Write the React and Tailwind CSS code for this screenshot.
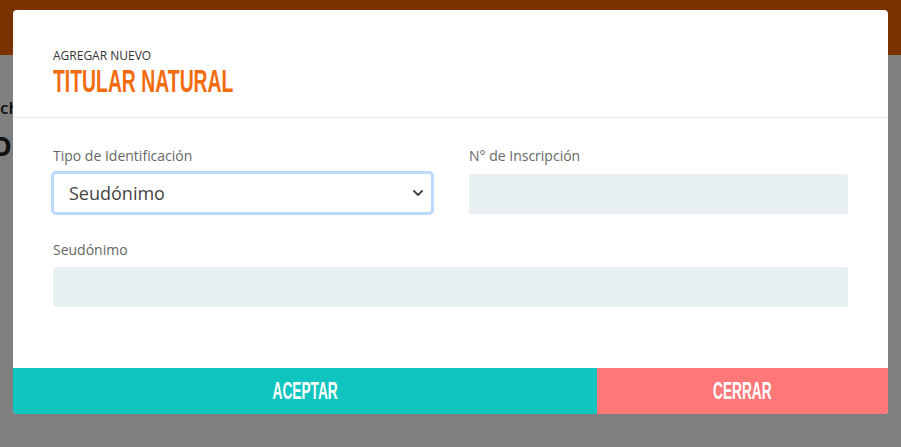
import { ChevronDown } from 'lucide-react'

const sans = "font-['Open_Sans',_'Liberation_Sans',_sans-serif]"
const narrow = "font-['Liberation_Sans',_Arial,_sans-serif]"

function Field({ label, children }) {
  return (
    <div className="flex flex-col">
      <label className="mb-[7px] text-[14px] leading-[20px] text-[#666]">{label}</label>
      {children}
    </div>
  )
}

function TextBox() {
  return <div className="h-[40px] rounded-[3px] bg-[#e8f0f3]" />
}

export default function App() {
  return (
    <div className={`relative h-[447px] w-[901px] overflow-hidden bg-white ${sans}`}>
      {/* page under the overlay */}
      <div className="h-[55px] bg-[#f46600]" />
      <div className="pt-[40px] text-[17px] font-semibold text-[#222]">
        <div>ch</div>
        <div className="-ml-[9px] mt-[6px] text-[26px] font-bold">O</div>
      </div>

      {/* overlay */}
      <div className="absolute inset-0 bg-black/50" />

      {/* modal */}
      <div className="absolute left-[13px] top-[10px] flex h-[404px] w-[875px] flex-col overflow-hidden rounded-[4px] bg-white">
        <div className="h-[108px] border-b border-[#e9e9e9] px-[40px] pt-[38px]">
          <div className="text-[12px] leading-[16px] text-[#333]">AGREGAR NUEVO</div>
          <div
            className={`mt-[1px] origin-left scale-x-[0.625] whitespace-nowrap text-[31px] font-bold leading-[34px] text-[#f26b0c] ${narrow}`}
          >
            TITULAR NATURAL
          </div>
        </div>

        <div className="flex-1 px-[40px] pt-[28px]">
          <div className="grid grid-cols-2 gap-x-[37px]">
            <Field label="Tipo de Identificación">
              <div className="-mx-[2px] -my-[2px] flex h-[44px] items-center justify-between rounded-[5px] border-[3px] border-[#bcdafc] bg-white pl-[15px] pr-[5px]">
                <span className="text-[18px] text-[#444]">Seudónimo</span>
                <ChevronDown size={16} strokeWidth={2.75} className="text-[#444]" />
              </div>
            </Field>
            <Field label="N° de Inscripción">
              <div className="mt-[1px]">
                <TextBox />
              </div>
            </Field>
          </div>
          <div className="mt-[26px]">
            <Field label="Seudónimo">
              <TextBox />
            </Field>
          </div>
        </div>

        <div className="flex h-[46px]">
          <button
            type="button"
            className={`flex w-[584px] items-center justify-center bg-[#10c4bf] text-[24px] font-bold text-white ${narrow}`}
          >
            <span className="scale-x-[0.57]">ACEPTAR</span>
          </button>
          <button
            type="button"
            className={`flex flex-1 items-center justify-center bg-[#ff7777] text-[24px] font-bold text-white ${narrow}`}
          >
            <span className="scale-x-[0.57]">CERRAR</span>
          </button>
        </div>
      </div>
    </div>
  )
}
